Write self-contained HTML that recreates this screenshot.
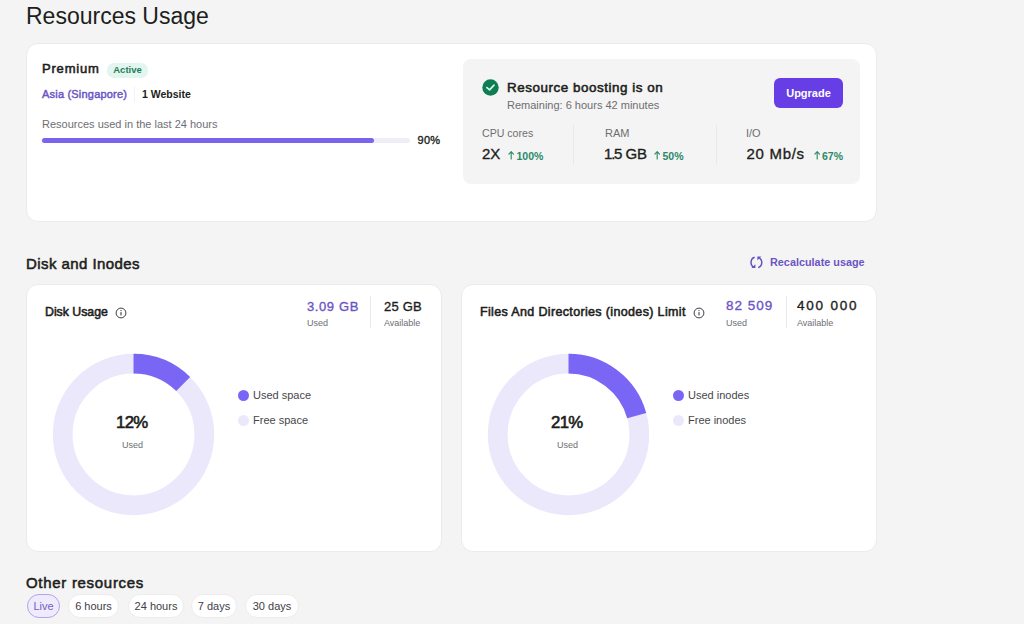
<!DOCTYPE html>
<html><head><meta charset="utf-8">
<style>
*{margin:0;padding:0;box-sizing:border-box}
html,body{width:1024px;height:624px;overflow:hidden;background:#f4f4f4;font-family:"Liberation Sans",sans-serif;color:#1d1e20}
.a{position:absolute;white-space:nowrap;line-height:1}
.card{position:absolute;background:#fff;border:1px solid #ebebeb;border-radius:12px}
.g{color:#6e6e72}
.p{color:#6b55c6}
.gr{color:#2a8a68;font-weight:bold}
.md{-webkit-text-stroke:0.35px currentColor}
.sb{-webkit-text-stroke:0.55px currentColor}
.sep{position:absolute;width:1px;background:#e9e9e9}
.pill{position:absolute;top:593.5px;height:24px;border-radius:12px;background:#fff;border:1px solid #ececec;font-size:11px;color:#404046;line-height:23px;text-align:center}
</style></head><body>

<div class="a" style="left:26px;top:5px;font-size:23px;">Resources Usage</div>

<div class="card" style="left:26px;top:43px;width:851px;height:179px"></div>
<div class="a sb" style="left:42px;top:62px;font-size:13px;letter-spacing:0.8px">Premium</div>
<div class="a" style="left:107px;top:63px;width:41px;height:15px;border-radius:7px;background:#e2f5ee;color:#1f7d5a;font-size:9.5px;font-weight:bold;text-align:center;line-height:14.5px">Active</div>
<div class="a p" style="left:42px;top:89px;font-size:11px;-webkit-text-stroke:0.45px currentColor;letter-spacing:0.2px">Asia (Singapore)</div>
<div class="a" style="left:142px;top:88.5px;font-size:10.5px;font-weight:bold">1 Website</div>
<div class="sep" style="left:134px;top:86px;height:16px;background:#f2f2f2"></div>
<div class="a g" style="left:42px;top:119px;font-size:11px">Resources used in the last 24 hours</div>
<div class="a" style="left:42px;top:138px;width:368px;height:5px;border-radius:3px;background:#efeef8"></div>
<div class="a" style="left:42px;top:138px;width:332px;height:5px;border-radius:3px;background:#7964ee"></div>
<div class="a md" style="left:417.5px;top:134.5px;font-size:11px;letter-spacing:0.3px">90%</div>

<div class="a" style="left:463px;top:59px;width:397px;height:124.5px;border-radius:8px;background:#f4f4f4"></div>
<svg class="a" style="left:482px;top:79px" width="17" height="17" viewBox="0 0 17 17"><circle cx="8.5" cy="8.5" r="8.2" fill="#0f7d53"/><path d="M4.9 8.6 L7.6 10.8 L12 6.2" fill="none" stroke="#d4f7e6" stroke-width="1.7" stroke-linecap="round" stroke-linejoin="round"/></svg>
<div class="a sb" style="left:507px;top:80.7px;font-size:13.4px;letter-spacing:0.55px">Resource boosting is on</div>
<div class="a g" style="left:507px;top:100px;font-size:11px">Remaining: 6 hours 42 minutes</div>
<div class="a" style="left:774px;top:78px;width:69px;height:30px;border-radius:6px;background:#673de6;color:#fff;font-size:11px;font-weight:bold;text-align:center;line-height:30px">Upgrade</div>

<div class="a g" style="left:482px;top:128px;font-size:10.6px">CPU cores</div>
<div class="a md" style="left:482px;top:146px;font-size:15px">2X</div>
<svg class="a" style="left:507.5px;top:150px" width="7" height="10" viewBox="0 0 7 10"><path d="M3.2 9 V1.8 M0.9 4.1 L3.2 1.7 L5.5 4.1" fill="none" stroke="#2f8c69" stroke-width="1.15" stroke-linecap="round" stroke-linejoin="round"/></svg><div class="a gr" style="left:516.5px;top:151px;font-size:10.5px">100%</div>
<div class="sep" style="left:573px;top:125px;height:40px"></div>
<div class="a g" style="left:605px;top:128px;font-size:11px">RAM</div>
<div class="a md" style="left:604px;top:146px;font-size:15px"><span style="letter-spacing:-1.2px">1.5</span><span style="letter-spacing:0px"> GB</span></div>
<svg class="a" style="left:654px;top:150px" width="7" height="10" viewBox="0 0 7 10"><path d="M3.2 9 V1.8 M0.9 4.1 L3.2 1.7 L5.5 4.1" fill="none" stroke="#2f8c69" stroke-width="1.15" stroke-linecap="round" stroke-linejoin="round"/></svg><div class="a gr" style="left:662.5px;top:151px;font-size:10.5px">50%</div>
<div class="sep" style="left:716px;top:125px;height:40px"></div>
<div class="a g" style="left:746px;top:128px;font-size:11px">I/O</div>
<div class="a md" style="left:746.5px;top:146px;font-size:15px;letter-spacing:0.7px">20 Mb/s</div>
<svg class="a" style="left:813.5px;top:150px" width="7" height="10" viewBox="0 0 7 10"><path d="M3.2 9 V1.8 M0.9 4.1 L3.2 1.7 L5.5 4.1" fill="none" stroke="#2f8c69" stroke-width="1.15" stroke-linecap="round" stroke-linejoin="round"/></svg><div class="a gr" style="left:822px;top:151px;font-size:10.5px">67%</div>

<div class="a sb" style="left:26px;top:256px;font-size:15px;letter-spacing:0.43px">Disk and Inodes</div>
<svg class="a" style="left:750px;top:256px" width="13" height="13" viewBox="0 0 13 13"><path d="M4.6 1.3 A5.4 5.4 0 0 0 4.2 11.3" fill="none" stroke="#6650c4" stroke-width="1.5"/><path d="M8.2 11.6 A5.4 5.4 0 0 0 8.6 1.6" fill="none" stroke="#6650c4" stroke-width="1.5"/><path d="M1.4 11.9 L5.4 11.9 L5.4 8.3 Z" fill="#6650c4"/><path d="M7.4 0.6 L11.4 0.6 L7.4 4.3 Z" fill="#6650c4"/></svg>
<div class="a p" style="left:770px;top:257px;font-size:10.85px;font-weight:bold">Recalculate usage</div>

<div class="card" style="left:26px;top:284px;width:416px;height:268px"></div>
<div class="card" style="left:461px;top:284px;width:416px;height:268px"></div>

<div class="a sb" style="left:45px;top:306px;font-size:12.3px;letter-spacing:0px">Disk Usage</div>
<svg class="a" style="left:115.3px;top:306.5px" width="12" height="12" viewBox="0 0 12 12"><circle cx="6" cy="6" r="4.9" fill="none" stroke="#3d3d44" stroke-width="1"/><rect x="5.45" y="5.1" width="1.1" height="3.3" fill="#3d3d44"/><circle cx="6" cy="3.6" r="0.65" fill="#3d3d44"/></svg>
<div class="a p md" style="left:307px;top:299.5px;font-size:13px;letter-spacing:0.6px">3.09 GB</div>
<div class="a g" style="left:307px;top:319px;font-size:9px">Used</div>
<div class="sep" style="left:370px;top:296px;height:32px"></div>
<div class="a md" style="left:384px;top:299.5px;font-size:13px;letter-spacing:0.2px">25 GB</div>
<div class="a g" style="left:384px;top:319px;font-size:9px">Available</div>

<svg class="a" style="left:52px;top:353px" width="163" height="163" viewBox="0 0 163 163"><circle cx="81.5" cy="81.5" r="70.8" fill="none" stroke="#ebe8fb" stroke-width="19.8"/><circle cx="81.5" cy="81.5" r="70.8" fill="none" stroke="#7a66f5" stroke-width="19.8" stroke-dasharray="54.98 1000" transform="rotate(-90 81.5 81.5)"/></svg>
<div class="a" style="left:116px;top:415px;font-size:16.8px;-webkit-text-stroke:0.6px currentColor;letter-spacing:-0.7px">12%</div>
<div class="a g" style="left:122px;top:440.5px;font-size:9px">Used</div>
<div class="a" style="left:238px;top:390px;width:11px;height:11px;border-radius:50%;background:#7a66f5"></div>
<div class="a" style="left:253px;top:390px;font-size:11px;color:#46464c">Used space</div>
<div class="a" style="left:238px;top:415px;width:11px;height:11px;border-radius:50%;background:#ebe8fb"></div>
<div class="a" style="left:253px;top:415px;font-size:11px;color:#46464c">Free space</div>

<div class="a sb" style="left:480px;top:306px;font-size:12.5px;letter-spacing:0.35px">Files And Directories (inodes) Limit</div>
<svg class="a" style="left:693.2px;top:306.5px" width="12" height="12" viewBox="0 0 12 12"><circle cx="6" cy="6" r="4.9" fill="none" stroke="#3d3d44" stroke-width="1"/><rect x="5.45" y="5.1" width="1.1" height="3.3" fill="#3d3d44"/><circle cx="6" cy="3.6" r="0.65" fill="#3d3d44"/></svg>
<div class="a p md" style="left:726px;top:299px;font-size:13.5px;letter-spacing:1px">82 509</div>
<div class="a g" style="left:726px;top:319px;font-size:9px">Used</div>
<div class="sep" style="left:786px;top:296px;height:32px"></div>
<div class="a md" style="left:797px;top:299px;font-size:13.5px;letter-spacing:1.8px">400 000</div>
<div class="a g" style="left:797px;top:319px;font-size:9px">Available</div>

<svg class="a" style="left:487px;top:353px" width="163" height="163" viewBox="0 0 163 163"><circle cx="81.5" cy="81.5" r="70.8" fill="none" stroke="#ebe8fb" stroke-width="19.8"/><circle cx="81.5" cy="81.5" r="70.8" fill="none" stroke="#7a66f5" stroke-width="19.8" stroke-dasharray="91.77 1000" transform="rotate(-90 81.5 81.5)"/></svg>
<div class="a" style="left:551px;top:415px;font-size:16.8px;-webkit-text-stroke:0.6px currentColor;letter-spacing:-0.7px">21%</div>
<div class="a g" style="left:557px;top:440.5px;font-size:9px">Used</div>
<div class="a" style="left:673px;top:390px;width:11px;height:11px;border-radius:50%;background:#7a66f5"></div>
<div class="a" style="left:688px;top:390px;font-size:11px;color:#46464c">Used inodes</div>
<div class="a" style="left:673px;top:415px;width:11px;height:11px;border-radius:50%;background:#ebe8fb"></div>
<div class="a" style="left:688px;top:415px;font-size:11px;color:#46464c">Free inodes</div>

<div class="a sb" style="left:26px;top:575px;font-size:15px;letter-spacing:0.7px">Other resources</div>
<div class="pill" style="left:27px;width:33px;background:#efebfc;border-color:#b3a3ea;color:#7360c2">Live</div>
<div class="pill" style="left:68px;width:51px">6 hours</div>
<div class="pill" style="left:128px;width:56px">24 hours</div>
<div class="pill" style="left:191px;width:46px">7 days</div>
<div class="pill" style="left:245px;width:54px">30 days</div>

</body></html>
